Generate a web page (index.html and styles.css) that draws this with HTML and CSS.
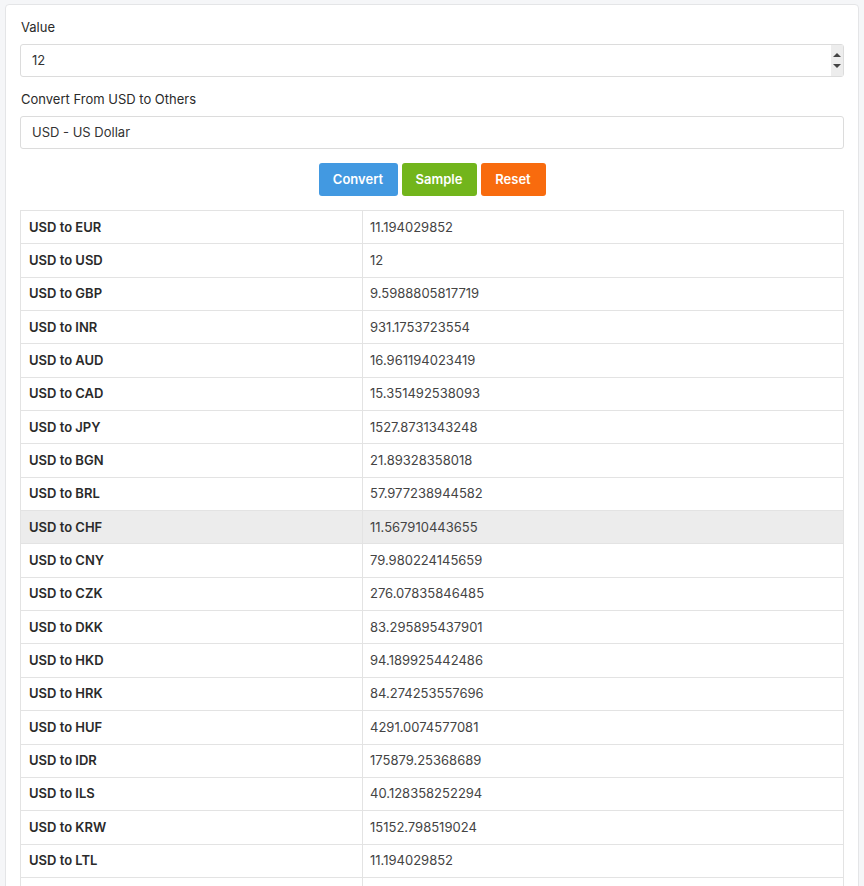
FILE: index.html
```html
<!DOCTYPE html>
<html>
<head>
<meta charset="utf-8">
<link rel="stylesheet" href="styles.css">
</head>
<body>
<div class="card">
  <label class="label">Value</label>
  <div class="input-wrap">
    <div class="input">12</div>
    <div class="spinner"><span class="up"></span><span class="down"></span></div>
  </div>
  <label class="label">Convert From USD to Others</label>
  <div class="input">USD - US Dollar</div>
  <div class="buttons">
    <button class="btn blue">Convert</button>
    <button class="btn green">Sample</button>
    <button class="btn orange">Reset</button>
  </div>
  <table class="rates">
    <tr><th>USD to EUR</th><td>11.194029852</td></tr>
    <tr><th>USD to USD</th><td>12</td></tr>
    <tr><th>USD to GBP</th><td>9.5988805817719</td></tr>
    <tr><th>USD to INR</th><td>931.1753723554</td></tr>
    <tr><th>USD to AUD</th><td>16.961194023419</td></tr>
    <tr><th>USD to CAD</th><td>15.351492538093</td></tr>
    <tr><th>USD to JPY</th><td>1527.8731343248</td></tr>
    <tr><th>USD to BGN</th><td>21.89328358018</td></tr>
    <tr><th>USD to BRL</th><td>57.977238944582</td></tr>
    <tr class="hover"><th>USD to CHF</th><td>11.567910443655</td></tr>
    <tr><th>USD to CNY</th><td>79.980224145659</td></tr>
    <tr><th>USD to CZK</th><td>276.07835846485</td></tr>
    <tr><th>USD to DKK</th><td>83.295895437901</td></tr>
    <tr><th>USD to HKD</th><td>94.189925442486</td></tr>
    <tr><th>USD to HRK</th><td>84.274253557696</td></tr>
    <tr><th>USD to HUF</th><td>4291.0074577081</td></tr>
    <tr><th>USD to IDR</th><td>175879.25368689</td></tr>
    <tr><th>USD to ILS</th><td>40.128358252294</td></tr>
    <tr><th>USD to KRW</th><td>15152.798519024</td></tr>
    <tr><th>USD to LTL</th><td>11.194029852</td></tr>
    <tr><th>USD to LVL</th><td>7.0089552236</td></tr>
  </table>
</div>
</body>
</html>
```
FILE: styles.css
```css
html, body {
  margin: 0;
  padding: 0;
  background: #f5f6f8;
  font-family: Inter, "Noto Sans", "Liberation Sans", sans-serif;
  font-size: 13px;
  color: #333;
}
.card {
  margin: 4px 5px 0 5px;
  background: #fff;
  border: 1px solid #e4e5e7;
  border-radius: 4px;
  padding: 13px 14px 20px 14px;
  display: flex;
  flex-direction: column;
}
.label {
  display: block;
  line-height: 18px;
  margin-bottom: 8px;
  padding-left: 1px;
  color: #2a2a2a;
}
.input-wrap {
  position: relative;
  margin-bottom: 13px;
}
.input {
  height: 31px;
  border: 1px solid #dcdcdc;
  border-radius: 3px;
  padding: 0 11px;
  line-height: 30px;
  color: #333;
  background: #fff;
}
.spinner {
  position: absolute;
  right: 1px;
  top: 1px;
  width: 12px;
  height: 31px;
  background: #ededed;
  display: flex;
  flex-direction: column;
  align-items: center;
  justify-content: center;
  gap: 7px;
}
.spinner .up {
  width: 0; height: 0;
  border-left: 4px solid transparent;
  border-right: 4px solid transparent;
  border-bottom: 4px solid #444;
}
.spinner .down {
  width: 0; height: 0;
  border-left: 4px solid transparent;
  border-right: 4px solid transparent;
  border-top: 4px solid #444;
}
.buttons {
  display: flex;
  justify-content: center;
  gap: 4px;
  margin: 14px 0 14px 0;
}
.btn {
  height: 33px;
  border: none;
  border-radius: 3px;
  color: #fff;
  font-family: Inter, "Noto Sans", sans-serif;
  font-size: 13px;
  font-weight: 600;
  padding: 0 0 1px 0;
}
.blue { background: #4299e1; width: 79px; }
.green { background: #72b51c; width: 75px; }
.orange { background: #f86b0e; width: 65px; }
.rates {
  width: 100%;
  border-collapse: collapse;
  border: 1px solid #e3e3e3;
}
.rates th, .rates td {
  border: 1px solid #e3e3e3;
  padding: 6.5px 8px 7.5px 8px;
  line-height: 18.35px;
  text-align: left;
  color: #2a2a2a;
}
.rates th {
  width: 325px;
  font-weight: 600;
}
.rates td {
  color: #444;
  padding-left: 7px;
}
.rates tr.hover th, .rates tr.hover td {
  background: #ececec;
}
```
